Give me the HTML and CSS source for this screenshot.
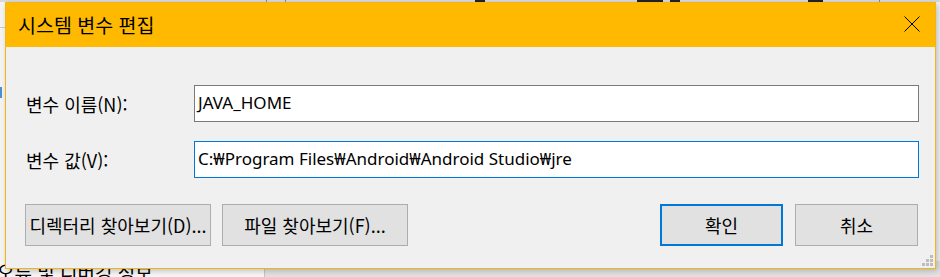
FILE: index.html
```html
<!DOCTYPE html>
<html lang="ko">
<head>
    <meta charset="UTF-8">
    <title>시스템 변수 편집</title>
    <link rel="stylesheet" href="styles.css">
</head>
<body>
    <div class="desktop">
        <div class="backwin">
            <div class="back-top">
                <span class="sep s1"></span>
                <span class="sep s2"></span>
                <span class="tick t1"></span>
                <span class="tick t2"></span>
                <span class="tick t3"></span>
                <span class="tick t4"></span>
                <span class="sep s3"></span>
            </div>
            <div class="back-middle">
                <span class="side-line"></span>
                <span class="side-mark"></span>
            </div>
            <div class="back-bottom">
                <span class="back-text">오류 및 디버깅 정보</span>
                <span class="back-col"></span>
            </div>
        </div>

        <div class="dialog">
            <div class="titlebar">
                <span class="title">시스템 변수 편집</span>
                <div class="close">
                    <svg width="16" height="16" viewBox="0 0 16 16">
                        <path d="M0.5 0.5 L15.5 15.5 M15.5 0.5 L0.5 15.5" stroke="#000" stroke-width="1" fill="none"/>
                    </svg>
                </div>
            </div>
            <div class="content">
                <div class="field">
                    <label class="label">변수 이름(N):</label>
                    <div class="textbox">JAVA_HOME</div>
                </div>
                <div class="field">
                    <label class="label">변수 값(V):</label>
                    <div class="textbox focused">C:₩Program Files₩Android₩Android Studio₩jre</div>
                </div>
                <div class="buttons">
                    <div class="group">
                        <button class="btn wide">디렉터리 찾아보기(D)...</button>
                        <button class="btn wide">파일 찾아보기(F)...</button>
                    </div>
                    <div class="group">
                        <button class="btn default">확인</button>
                        <button class="btn">취소</button>
                    </div>
                </div>
            </div>
            <svg class="grip" width="11" height="11" viewBox="0 0 11 11">
                <rect x="8" y="0" width="3" height="3" fill="#bdbdbd"/>
                <rect x="4" y="4" width="3" height="3" fill="#bdbdbd"/>
                <rect x="8" y="4" width="3" height="3" fill="#bdbdbd"/>
                <rect x="0" y="8" width="3" height="3" fill="#bdbdbd"/>
                <rect x="4" y="8" width="3" height="3" fill="#bdbdbd"/>
                <rect x="8" y="8" width="3" height="3" fill="#bdbdbd"/>
            </svg>
        </div>
    </div>
</body>
</html>
```

FILE: styles.css
```css
* {
    box-sizing: border-box;
}
body {
    margin: 0;
    font-family: 'Noto Sans CJK KR', 'Noto Sans', sans-serif;
    background-color: #f2f2f2;
    color: #000;
}
.desktop {
    position: relative;
    width: 940px;
    height: 277px;
    overflow: hidden;
}

/* window behind the dialog */
.backwin {
    display: flex;
    flex-direction: column;
    height: 277px;
}
.back-top {
    position: relative;
    height: 2px;
    background-color: #d9d9d9;
}
.sep {
    position: absolute;
    top: 0;
    width: 1px;
    height: 2px;
    background-color: #8a8a8a;
}
.s1 { left: 266px; }
.s2 { left: 285px; }
.s3 { left: 879px; }
.tick {
    position: absolute;
    top: 0;
    height: 2px;
    background-color: #222;
}
.t1 { left: 475px; width: 10px; }
.t2 { left: 637px; width: 26px; }
.t3 { left: 670px; width: 10px; }
.t4 { left: 808px; width: 15px; }
.back-middle {
    position: relative;
    flex: 1;
    background-color: #f4f4f4;
}
.side-line {
    position: absolute;
    top: 25px;
    left: 0;
    width: 5px;
    height: 1px;
    background-color: #c9c9c9;
}
.side-mark {
    position: absolute;
    top: 85px;
    left: 0;
    width: 2px;
    height: 11px;
    background-color: #4a90d9;
}
.back-bottom {
    display: flex;
    height: 16px;
    background-color: #f7f7f7;
}
.back-text {
    width: 267px;
    margin-left: -3px;
    font-size: 19px;
    line-height: 22px;
    white-space: nowrap;
}
.back-col {
    flex: 1;
    border-left: 1px solid #c6c6c6;
    background-color: #e3e3e3;
}

/* the dialog */
.dialog {
    position: absolute;
    left: 5px;
    top: 2px;
    width: 931px;
    height: 267px;
    border: 1px solid #f2b417;
    background-color: #f0f0f0;
    box-shadow: 2px 2px 6px rgba(0, 0, 0, 0.22);
    display: flex;
    flex-direction: column;
}
.titlebar {
    height: 44px;
    background-color: #ffb900;
    display: flex;
    align-items: center;
    justify-content: space-between;
}
.title {
    padding-left: 12px;
    padding-bottom: 1px;
    font-size: 19.5px;
}
.close {
    width: 46px;
    height: 44px;
    display: flex;
    align-items: center;
    justify-content: center;
    padding-bottom: 2px;
}
.content {
    flex: 1;
    padding: 38px 16px 22px 19px;
    display: flex;
    flex-direction: column;
}
.field {
    display: flex;
    align-items: center;
    height: 37px;
    margin-bottom: 19px;
}
.label {
    width: 169px;
    padding-left: 1px;
    font-size: 18px;
}
.textbox {
    flex: 1;
    height: 37px;
    border: 1px solid #7a7a7a;
    background-color: #fff;
    padding: 0 3px;
    font-family: 'Noto Sans', 'Noto Sans CJK KR', sans-serif;
    font-size: 17px;
    line-height: 34px;
    white-space: nowrap;
}
.textbox.focused {
    border-color: #0078d7;
}
.buttons {
    display: flex;
    justify-content: space-between;
    margin-top: 7px;
    margin-right: 1px;
}
.group {
    display: flex;
    gap: 11px;
}
.btn {
    width: 123px;
    height: 42px;
    border: 1px solid #adadad;
    background-color: #e1e1e1;
    font-family: 'Noto Sans CJK KR', 'Noto Sans', sans-serif;
    font-size: 18px;
    color: #000;
    padding: 0;
    white-space: nowrap;
}
.btn.wide {
    width: 186px;
}
.btn.default {
    border: 2px solid #0078d7;
    margin-right: 1px;
}
.grip {
    position: absolute;
    right: 2px;
    bottom: 2px;
}
```
